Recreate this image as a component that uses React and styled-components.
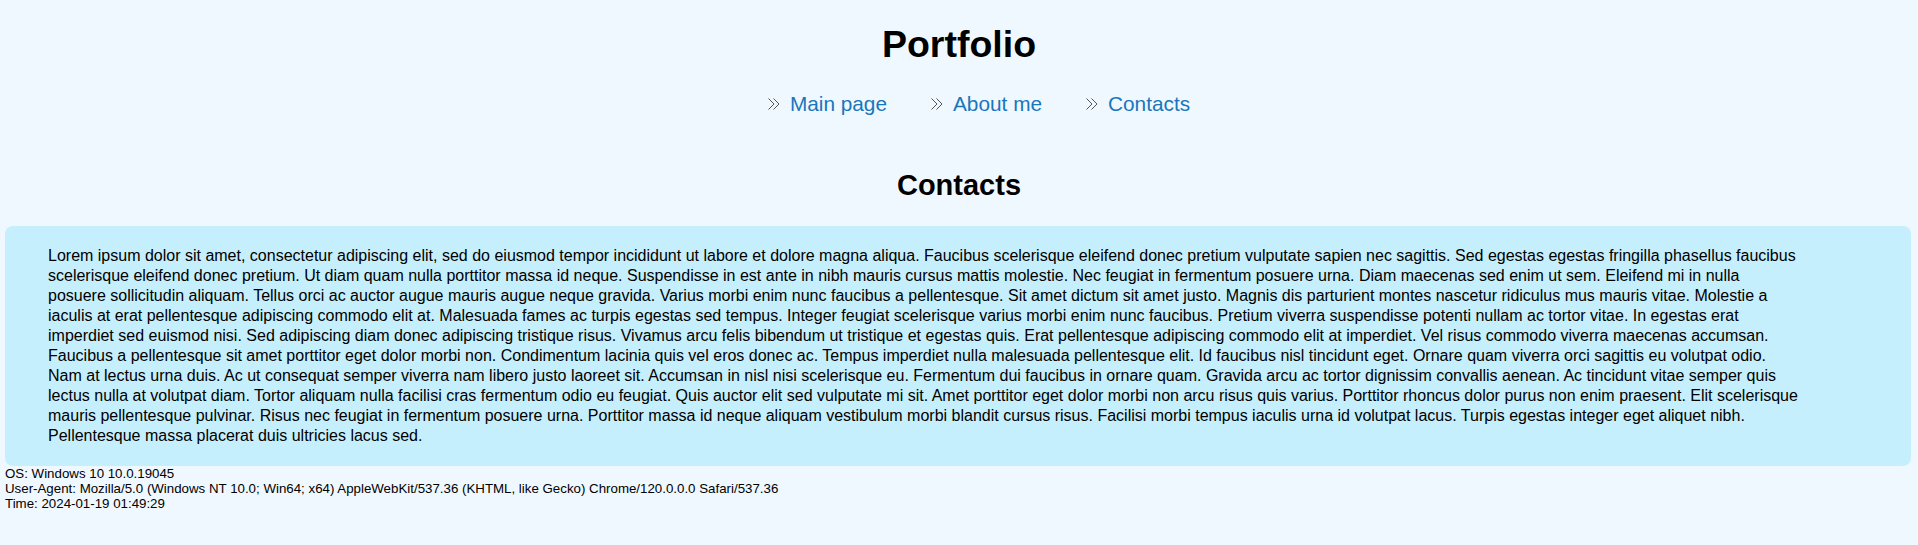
import React from 'react';
import styled, { createGlobalStyle } from 'styled-components';

const GlobalStyle = createGlobalStyle`
  html, body {
    margin: 0;
    padding: 0;
    background: #f0f8ff;
  }
  body {
    font-family: "Liberation Sans", Arial, sans-serif;
    color: #000;
  }
`;

const Page = styled.div`
  display: flex;
  flex-direction: column;
  padding-top: 23px;
`;

const Title = styled.h1`
  margin: 0;
  font-size: 37.5px;
  line-height: 42px;
  font-weight: bold;
  text-align: center;
`;

const Nav = styled.ul`
  display: flex;
  justify-content: center;
  gap: 44px;
  list-style: none;
  margin: 27px 0 0;
  padding: 0 0 0 40px;
`;

const NavItem = styled.li`
  display: flex;
  align-items: center;
  gap: 10px;
  font-size: 20.8px;
  line-height: 24px;
`;

const NavLink = styled.a`
  color: #1976bd;
  text-decoration: none;
  cursor: pointer;

  &:hover {
    text-decoration: underline;
  }
`;

const SectionTitle = styled.h2`
  margin: 53px 0 0;
  font-size: 29px;
  line-height: 32px;
  font-weight: bold;
  text-align: center;
`;

const ContentBox = styled.div`
  margin: 25px 7px 0 5px;
  padding: 20px 43px;
  background: #c6effe;
  border-radius: 8px;
`;

const Text = styled.p`
  margin: 0;
  font-size: 16px;
  line-height: 20px;
  white-space: pre-line;
  color: #000;
`;

const Footer = styled.div`
  padding: 0 5px;
  font-size: 13.3px;
  line-height: 15px;
`;

const Chevrons = () => (
  <svg width="12" height="12" viewBox="0 0 12 12" fill="none" stroke="#555" strokeWidth="1">
    <path d="M0.5 0.5 L6 6 L0.5 11.5" />
    <path d="M5.5 0.5 L11 6 L5.5 11.5" />
  </svg>
);

const links = ['Main page', 'About me', 'Contacts'];

const loremLines = [
  'Lorem ipsum dolor sit amet, consectetur adipiscing elit, sed do eiusmod tempor incididunt ut labore et dolore magna aliqua. Faucibus scelerisque eleifend donec pretium vulputate sapien nec sagittis. Sed egestas egestas fringilla phasellus faucibus',
  'scelerisque eleifend donec pretium. Ut diam quam nulla porttitor massa id neque. Suspendisse in est ante in nibh mauris cursus mattis molestie. Nec feugiat in fermentum posuere urna. Diam maecenas sed enim ut sem. Eleifend mi in nulla',
  'posuere sollicitudin aliquam. Tellus orci ac auctor augue mauris augue neque gravida. Varius morbi enim nunc faucibus a pellentesque. Sit amet dictum sit amet justo. Magnis dis parturient montes nascetur ridiculus mus mauris vitae. Molestie a',
  'iaculis at erat pellentesque adipiscing commodo elit at. Malesuada fames ac turpis egestas sed tempus. Integer feugiat scelerisque varius morbi enim nunc faucibus. Pretium viverra suspendisse potenti nullam ac tortor vitae. In egestas erat',
  'imperdiet sed euismod nisi. Sed adipiscing diam donec adipiscing tristique risus. Vivamus arcu felis bibendum ut tristique et egestas quis. Erat pellentesque adipiscing commodo elit at imperdiet. Vel risus commodo viverra maecenas accumsan.',
  'Faucibus a pellentesque sit amet porttitor eget dolor morbi non. Condimentum lacinia quis vel eros donec ac. Tempus imperdiet nulla malesuada pellentesque elit. Id faucibus nisl tincidunt eget. Ornare quam viverra orci sagittis eu volutpat odio.',
  'Nam at lectus urna duis. Ac ut consequat semper viverra nam libero justo laoreet sit. Accumsan in nisl nisi scelerisque eu. Fermentum dui faucibus in ornare quam. Gravida arcu ac tortor dignissim convallis aenean. Ac tincidunt vitae semper quis',
  'lectus nulla at volutpat diam. Tortor aliquam nulla facilisi cras fermentum odio eu feugiat. Quis auctor elit sed vulputate mi sit. Amet porttitor eget dolor morbi non arcu risus quis varius. Porttitor rhoncus dolor purus non enim praesent. Elit scelerisque',
  'mauris pellentesque pulvinar. Risus nec feugiat in fermentum posuere urna. Porttitor massa id neque aliquam vestibulum morbi blandit cursus risus. Facilisi morbi tempus iaculis urna id volutpat lacus. Turpis egestas integer eget aliquet nibh.',
  'Pellentesque massa placerat duis ultricies lacus sed.',
];

const App = () => {
  return (
    <>
      <GlobalStyle />
      <Page>
        <Title>Portfolio</Title>
        <Nav>
          {links.map((label) => (
            <NavItem key={label}>
              <Chevrons />
              <NavLink href="#">{label}</NavLink>
            </NavItem>
          ))}
        </Nav>
        <SectionTitle>Contacts</SectionTitle>
        <ContentBox>
          <Text>{loremLines.join('\n')}</Text>
        </ContentBox>
        <Footer>
          <div>OS: Windows 10 10.0.19045</div>
          <div>User-Agent: Mozilla/5.0 (Windows NT 10.0; Win64; x64) AppleWebKit/537.36 (KHTML, like Gecko) Chrome/120.0.0.0 Safari/537.36</div>
          <div>Time: 2024-01-19 01:49:29</div>
        </Footer>
      </Page>
    </>
  );
};

export default App;
